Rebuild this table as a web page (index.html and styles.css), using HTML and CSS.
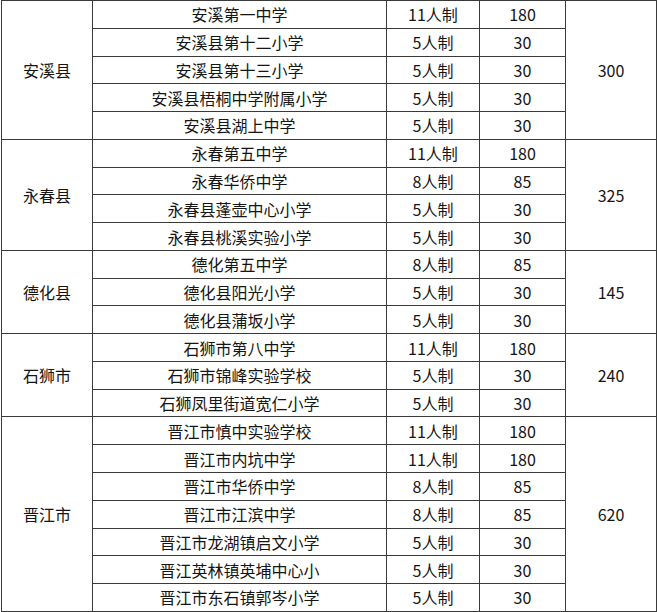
FILE: index.html
```html
<!DOCTYPE html>
<html lang="zh">
<head>
<meta charset="utf-8">
<link rel="stylesheet" href="styles.css">
</head>
<body>
<table class="quota">
  <colgroup>
    <col class="c-county"><col class="c-school"><col class="c-mode"><col class="c-num"><col class="c-total">
  </colgroup>
  <tbody>
    <tr><td rowspan="5">安溪县</td><td>安溪第一中学</td><td>11人制</td><td>180</td><td rowspan="5">300</td></tr>
    <tr><td>安溪县第十二小学</td><td>5人制</td><td>30</td></tr>
    <tr><td>安溪县第十三小学</td><td>5人制</td><td>30</td></tr>
    <tr><td>安溪县梧桐中学附属小学</td><td>5人制</td><td>30</td></tr>
    <tr><td>安溪县湖上中学</td><td>5人制</td><td>30</td></tr>

    <tr><td rowspan="4">永春县</td><td>永春第五中学</td><td>11人制</td><td>180</td><td rowspan="4">325</td></tr>
    <tr><td>永春华侨中学</td><td>8人制</td><td>85</td></tr>
    <tr><td>永春县蓬壶中心小学</td><td>5人制</td><td>30</td></tr>
    <tr><td>永春县桃溪实验小学</td><td>5人制</td><td>30</td></tr>

    <tr><td rowspan="3">德化县</td><td>德化第五中学</td><td>8人制</td><td>85</td><td rowspan="3">145</td></tr>
    <tr><td>德化县阳光小学</td><td>5人制</td><td>30</td></tr>
    <tr><td>德化县蒲坂小学</td><td>5人制</td><td>30</td></tr>

    <tr><td rowspan="3">石狮市</td><td>石狮市第八中学</td><td>11人制</td><td>180</td><td rowspan="3">240</td></tr>
    <tr><td>石狮市锦峰实验学校</td><td>5人制</td><td>30</td></tr>
    <tr><td>石狮凤里街道宽仁小学</td><td>5人制</td><td>30</td></tr>

    <tr><td rowspan="7">晋江市</td><td>晋江市慎中实验学校</td><td>11人制</td><td>180</td><td rowspan="7">620</td></tr>
    <tr><td>晋江市内坑中学</td><td>11人制</td><td>180</td></tr>
    <tr><td>晋江市华侨中学</td><td>8人制</td><td>85</td></tr>
    <tr><td>晋江市江滨中学</td><td>8人制</td><td>85</td></tr>
    <tr><td>晋江市龙湖镇启文小学</td><td>5人制</td><td>30</td></tr>
    <tr><td>晋江英林镇英埔中心小</td><td>5人制</td><td>30</td></tr>
    <tr><td>晋江市东石镇郭岑小学</td><td>5人制</td><td>30</td></tr>
  </tbody>
</table>
</body>
</html>
```
FILE: styles.css
```css
html, body {
  margin: 0;
  padding: 0;
  background: #ffffff;
}

body {
  padding-left: 1px;
  font-family: "Noto Sans CJK SC", "Noto Sans", sans-serif;
  color: #151515;
}

.quota {
  border-collapse: collapse;
  table-layout: fixed;
  width: 655px;
  height: 611px;
}

.c-county { width: 91px; }
.c-school { width: 294px; }
.c-mode { width: 93px; }
.c-num { width: 86px; }
.c-total { width: 91px; }

.quota td {
  border: 1px solid #3a3a3a;
  padding: 0;
  text-align: center;
  vertical-align: middle;
  font-size: 16px;
  line-height: 20px;
  height: 26.77px;
  white-space: nowrap;
  overflow: hidden;
}
```
